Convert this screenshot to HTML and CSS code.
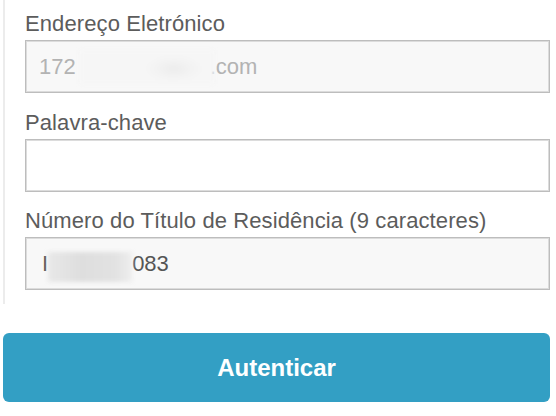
FILE: index.html
```html
<!DOCTYPE html>
<html lang="pt">
<head>
<meta charset="utf-8">
<link rel="stylesheet" href="styles.css">
</head>
<body>
<div class="page">
  <form class="fields">
    <div class="field">
      <label class="label">Endereço Eletrónico</label>
      <div class="box box-disabled"><span class="val val-muted">172</span><span class="redact redact-light"></span><span class="val val-muted">.com</span></div>
    </div>
    <div class="field">
      <label class="label">Palavra-chave</label>
      <div class="box"></div>
    </div>
    <div class="field">
      <label class="label">Número do Título de Residência (9 caracteres)</label>
      <div class="box box-disabled"><span class="val val-lead">I</span><span class="redact redact-dark"></span><span class="val">083</span></div>
    </div>
  </form>
  <button class="btn" type="button">Autenticar</button>
</div>
</body>
</html>
```
FILE: styles.css
```css
html, body {
  margin: 0;
  padding: 0;
  background: #ffffff;
}
body {
  font-family: "Liberation Sans", Arial, sans-serif;
}
.page {
  padding: 0 6px 0 3px;
}
.fields {
  display: flex;
  flex-direction: column;
  gap: 16.5px;
  border-left: 2px solid #ececec;
  padding: 11px 0 14px 20px;
  margin: 0;
}
.field {
  display: flex;
  flex-direction: column;
}
.label {
  font-size: 22px;
  line-height: 25px;
  color: #5c5c5c;
  margin-bottom: 4px;
  letter-spacing: 0.1px;
}
.box {
  box-sizing: border-box;
  height: 53px;
  border: 1px solid #bdbdbd;
  box-shadow: inset 0 0 0 1px #dcdcdc;
  background: #ffffff;
  padding: 0 13px;
  display: flex;
  align-items: center;
  font-size: 22px;
  color: #555555;
  overflow: hidden;
  white-space: nowrap;
}
.box-disabled {
  background: #f8f8f8;
}
.val {
  line-height: 25px;
}
.val-lead {
  margin-left: 3px;
}
.val-muted {
  color: #b3b3b3;
}
.redact {
  display: inline-block;
  flex: none;
  filter: blur(2px);
}
.redact-light {
  width: 134px;
  height: 34px;
  margin-left: 4px;
  margin-right: -4px;
  background: radial-gradient(ellipse 30px 14px at 70% 55%, #ececec 0%, #f3f3f3 60%, #f6f6f6 100%);
}
.redact-dark {
  width: 84px;
  height: 30px;
  margin-top: 6px;
  background: linear-gradient(90deg, #e8e8e8 0%, #dedede 40%, #e2e2e2 80%, #eeeeee 100%);
}
.btn {
  display: block;
  width: 100%;
  height: 69px;
  margin-top: 29px;
  border: none;
  border-radius: 6px;
  background: #339fc4;
  color: #ffffff;
  font-family: "Liberation Sans", Arial, sans-serif;
  font-weight: bold;
  font-size: 24px;
  padding: 0;
  cursor: pointer;
}
```
